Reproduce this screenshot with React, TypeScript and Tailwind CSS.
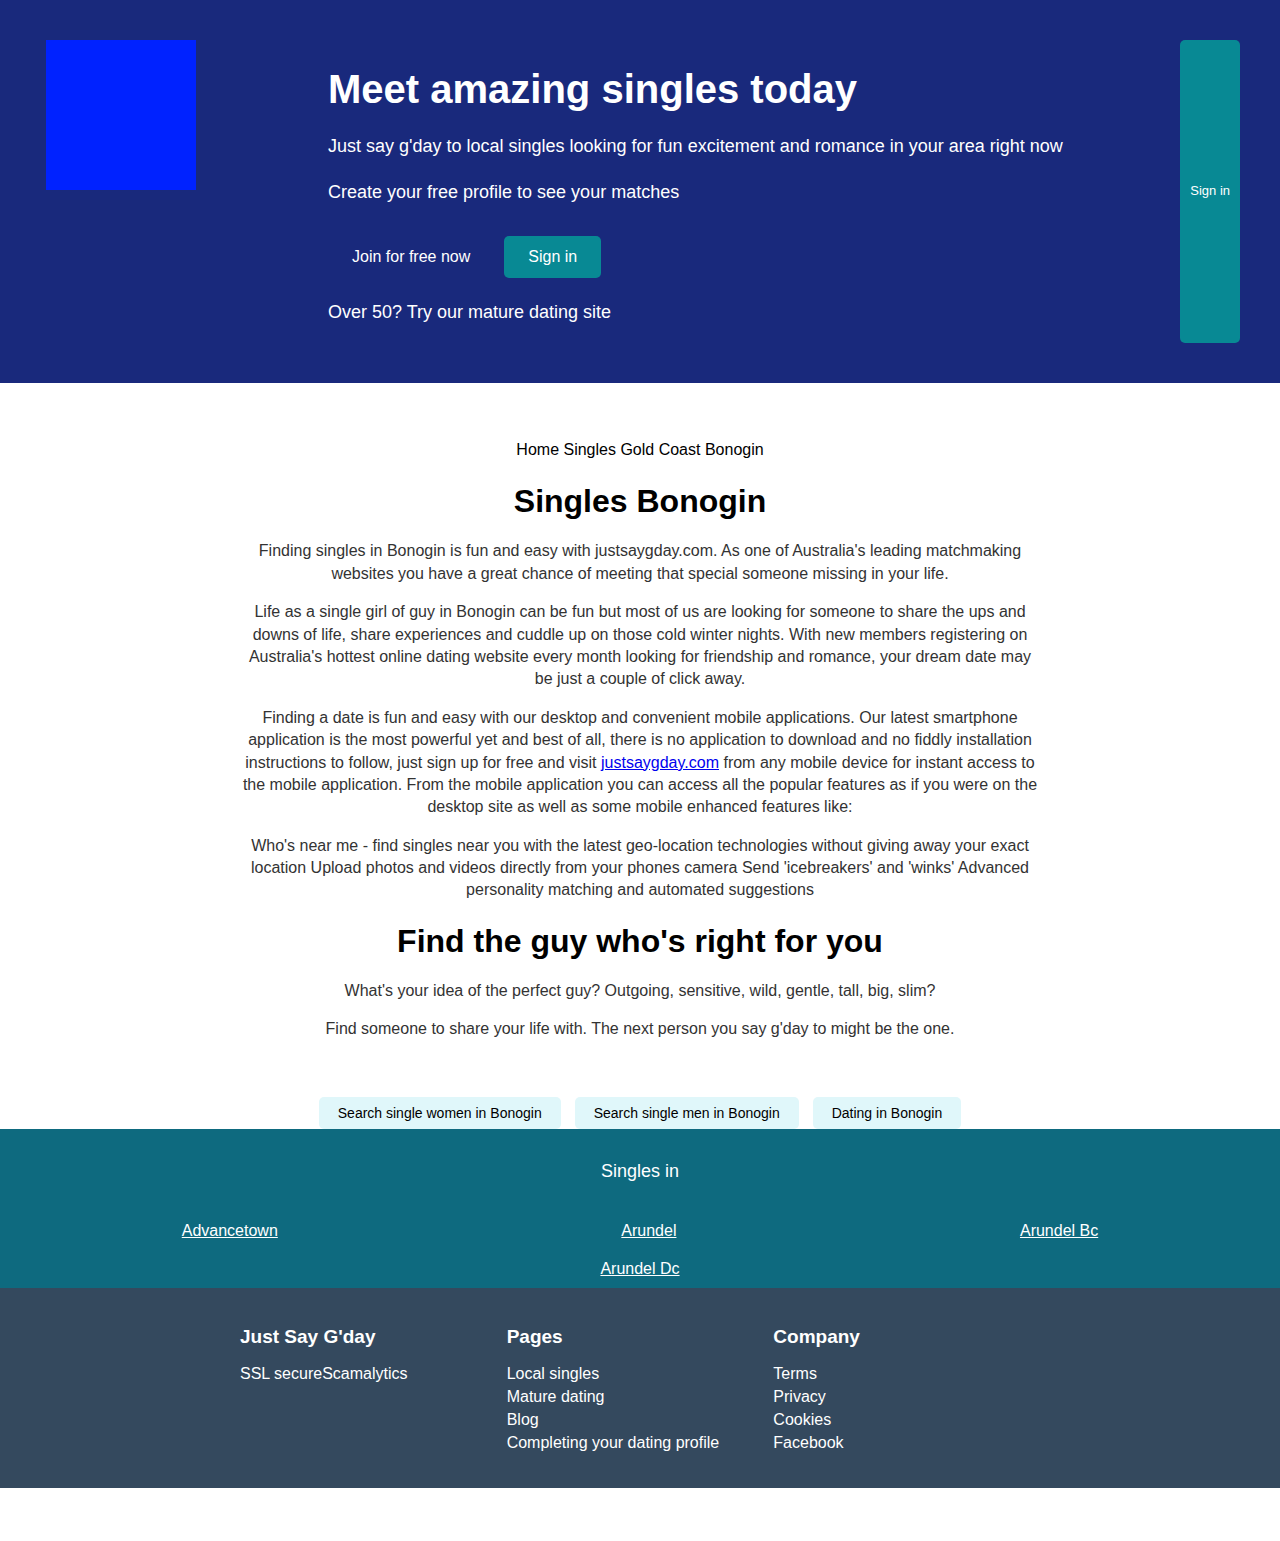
import React from "react";

const body = [
  "Finding singles in Bonogin is fun and easy with justsaygday.com. As one of Australia's leading matchmaking websites you have a great chance of meeting that special someone missing in your life.",
  "Life as a single girl of guy in Bonogin can be fun but most of us are looking for someone to share the ups and downs of life, share experiences and cuddle up on those cold winter nights. With new members registering on Australia's hottest online dating website every month looking for friendship and romance, your dream date may be just a couple of click away.",
];

const searches = ["Search single women in Bonogin", "Search single men in Bonogin", "Dating in Bonogin"];

function FooterColumn({ title, links }: { title: string; links: string[] }) {
  return (
    <div>
      <h3 className="mb-3 text-[19px] leading-[26px] font-bold">{title}</h3>
      <ul>
        {links.map((l) => (
          <li key={l} className="leading-[23px]">
            <a href="#">{l}</a>
          </li>
        ))}
      </ul>
    </div>
  );
}

export default function App() {
  return (
    <div className="bg-white font-['Liberation_Sans',Arial,sans-serif] text-base leading-[1.4] text-black">
      <header className="flex bg-[#19297c] p-10 text-white">
        <div className="ml-[6px] size-[150px] shrink-0 bg-[#0022ff]" />
        <div className="ml-[132px] flex-1 pt-5 pb-[18px] text-lg leading-[25px]">
          <h1 className="mb-4 text-[40px] leading-[58px] font-bold">Meet amazing singles today</h1>
          <p className="mb-[21px]">Just say g'day to local singles looking for fun excitement and romance in your area right now</p>
          <p>Create your free profile to see your matches</p>
          <div className="mt-[31px] mb-[22px] flex gap-[10px] text-base">
            <button className="px-6 py-[10px] leading-[22px]">Join for free now</button>
            <button className="rounded-[5px] bg-[#088994] px-6 py-[10px] leading-[22px]">Sign in</button>
          </div>
          <p>Over 50? Try our mature dating site</p>
        </div>
        <button className="rounded-[5px] bg-[#088994] px-[10px] text-[13px]">Sign in</button>
      </header>

      <main className="mx-auto mt-14 max-w-[800px] text-center">
        <nav>
          <a href="#">Home</a> <a href="#">Singles</a> <a href="#">Gold Coast</a> <a href="#">Bonogin</a>
        </nav>
        <h2 className="mt-[18px] mb-4 text-[32px] leading-[45px] font-bold">Singles Bonogin</h2>
        <div className="space-y-4 text-[#333333]">
          {body.map((p) => (
            <p key={p}>{p}</p>
          ))}
          <p>
            Finding a date is fun and easy with our desktop and convenient mobile applications. Our latest smartphone application is the most powerful yet and best of all, there is no application to download and no fiddly installation instructions to follow, just sign up for free and visit{" "}
            <a href="#" className="text-[#0000ee] underline">justsaygday.com</a> from any mobile device for instant access to the mobile application. From the mobile application you can access all the popular features as if you were on the desktop site as well as some mobile enhanced features like:
          </p>
          <p>
            Who's near me - find singles near you with the latest geo-location technologies without giving away your exact location Upload photos and videos directly from your phones camera Send 'icebreakers' and 'winks' Advanced personality matching and automated suggestions
          </p>
        </div>
        <h2 className="mt-[17px] mb-4 text-[32px] leading-[45px] font-bold">Find the guy who's right for you</h2>
        <div className="space-y-4 text-[#333333]">
          <p>What's your idea of the perfect guy? Outgoing, sensitive, wild, gentle, tall, big, slim?</p>
          <p>Find someone to share your life with. The next person you say g'day to might be the one.</p>
        </div>
      </main>

      <div className="mt-14 flex justify-center gap-[14px] text-[14px] leading-4">
        {searches.map((s) => (
          <button key={s} className="rounded-[5px] bg-[#e0f7fa] px-[19px] py-2">{s}</button>
        ))}
      </div>

      <section className="bg-[#0e6a7f] px-5 pt-[30px] pb-2 text-center text-white">
        <p className="mb-[37px] text-lg leading-6">Singles in</p>
        <div className="flex flex-wrap justify-around gap-x-5 gap-y-4">
          <a href="#" className="underline">Advancetown</a>
          <a href="#" className="underline">Arundel</a>
          <a href="#" className="underline">Arundel Bc</a>
          <div className="w-full"><a href="#" className="underline">Arundel Dc</a></div>
        </div>
      </section>

      <footer className="mb-[53px] bg-[#34495e] pt-9 pb-[34px] text-white">
        <div className="mx-auto grid max-w-[800px] grid-cols-3">
          <div>
            <h3 className="mb-3 text-[19px] leading-[26px] font-bold">Just Say G'day</h3>
            <p className="leading-[23px]"><a href="#">SSL secure</a><a href="#">Scamalytics</a></p>
          </div>
          <FooterColumn title="Pages" links={["Local singles", "Mature dating", "Blog", "Completing your dating profile"]} />
          <FooterColumn title="Company" links={["Terms", "Privacy", "Cookies", "Facebook"]} />
        </div>
      </footer>
    </div>
  );
}
